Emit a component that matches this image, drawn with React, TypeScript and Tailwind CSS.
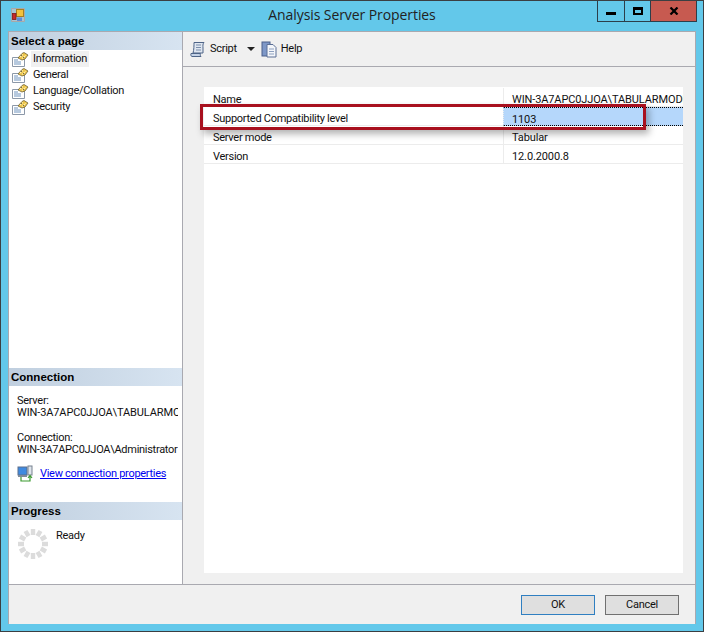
const pages = ['Information', 'General', 'Language/Collation', 'Security'];

const rows = [
  { name: 'Name', value: 'WIN-3A7APC0JJOA\\TABULARMODE' },
  { name: 'Supported Compatibility level', value: '1103', selected: true },
  { name: 'Server mode', value: 'Tabular' },
  { name: 'Version', value: '12.0.2000.8' },
];

function PageIcon() {
  return (
    <svg width="17" height="15" viewBox="0 0 17 15" className="shrink-0">
      <path d="M0.5 5.5H12.5V14.5H0.5Z" fill="#fff" stroke="#8c98a8" />
      <path d="M2 8H6M2 10H9M2 12H9" stroke="#6f93bd" />
      <path d="M6 6L10 1.5L12 0.5L16 3L13 7L10 8Z" fill="#eec64a" stroke="#6e6238" strokeWidth="0.8" />
      <path d="M8 5L11 2.5M10 6.5L13.5 3.5" stroke="#fff6c4" />
      <path d="M9 3L10 4M11 5L12 6" stroke="#4d4a38" strokeWidth="0.8" />
    </svg>
  );
}

function SectionHeader({ title }: { title: string }) {
  return (
    <div
      className="flex h-[18px] items-center bg-gradient-to-r from-[#c0cfdf] to-[#d7e4f1] pl-[2px] pt-[2px] text-[11.5px] font-bold tracking-normal text-black"
      style={{ fontFamily: '"Liberation Sans", Arial, sans-serif' }}
    >
      {title}
    </div>
  );
}

function Spinner() {
  const dots = Array.from({ length: 12 }, (_, i) => (i * 360) / 12);
  return (
    <svg width="30" height="30" viewBox="0 0 30 30">
      {dots.map((angle) => (
        <rect key={angle} x="12.8" y="0" width="4.4" height="6" fill="#dcdcdc" transform={`rotate(${angle} 15 15)`} />
      ))}
    </svg>
  );
}

export default function App() {
  return (
    <div
      className="relative flex h-[632px] w-[704px] flex-col overflow-hidden border border-[#3b3f42] bg-[#63c8ea] text-[11px] tracking-[-0.28px] text-[#111]"
      style={{ fontFamily: 'Roboto, "Liberation Sans", sans-serif' }}
    >
      {/* title bar */}
      <div className="grid h-[30px] shrink-0 grid-cols-[1fr_auto_1fr] items-start">
        <div className="pl-[10px] pt-[7px]">
          <svg width="14" height="14" viewBox="0 0 14 14" className="block">
            <path d="M0.5 0.5H13.5V13.5H0.5Z" fill="#a9c4d2" stroke="#a8a8a8" />
            <rect x="5.5" y="1.5" width="7" height="7" fill="#f3c23c" stroke="#a5801f" />
            <rect x="1.5" y="5.5" width="3.5" height="6" fill="#c62828" stroke="#7a1a1a" strokeWidth="0.8" />
            <rect x="6" y="9.5" width="5" height="3.5" fill="#5d8fd6" />
          </svg>
        </div>
        <div className="pt-[4px] text-[14px] leading-[20px] tracking-[-0.08px] text-[#222]" style={{ fontFamily: '"Open Sans", sans-serif' }}>
          Analysis Server Properties
        </div>
        <div className="flex justify-end pr-[6px]">
          <div className="flex h-[21px] border border-t-0 border-[#2c3e4a]">
            <div className="flex w-[27px] items-center justify-center border-r border-[#2c3e4a]">
              <div className="mt-[5px] h-[3px] w-[10px] bg-black" />
            </div>
            <div className="flex w-[26px] items-center justify-center border-r border-[#2c3e4a]">
              <div className="h-[8px] w-[10px] border-2 border-t-[3px] border-black" />
            </div>
            <div className="flex w-[45px] items-center justify-center bg-[#c75a50]">
              <svg width="10" height="8" viewBox="0 0 10 8">
                <path d="M1.5 0.5L8.5 7.5M8.5 0.5L1.5 7.5" stroke="#000" strokeWidth="2.2" />
              </svg>
            </div>
          </div>
        </div>
      </div>

      {/* client area */}
      <div className="mx-[7px] mb-[7px] flex min-h-0 flex-1 flex-col border-x border-t border-[#a9a9b0] bg-[#f0f0f0]">
        <div className="flex min-h-0 flex-1 border-b border-[#a9a9b0]">
          {/* left panel */}
          <div className="flex w-[174px] shrink-0 flex-col border-r border-[#a9a9b0] bg-white">
            <SectionHeader title="Select a page" />
            <div className="flex flex-col pt-[1px]">
              {pages.map((page, i) => (
                <div key={page} className="flex h-[16px] items-center pl-[3px]">
                  <PageIcon />
                  <span className={`ml-[2px] px-[2px] leading-[16px] ${i === 0 ? 'bg-[#f0f0f0]' : ''}`}>{page}</span>
                </div>
              ))}
            </div>
            <div className="flex-1" />
            <SectionHeader title="Connection" />
            <div className="flex h-[116px] flex-col pl-[8px] pt-[9px] leading-[12px]">
              <div>Server:</div>
              <div className="w-[161px] overflow-hidden whitespace-nowrap tracking-[-0.12px]">WIN-3A7APC0JJOA\TABULARMODE</div>
              <div className="mt-[13px]">Connection:</div>
              <div className="w-[161px] overflow-hidden whitespace-nowrap">WIN-3A7APC0JJOA\Administrator</div>
              <div className="mt-[9px] flex items-center gap-[6px]">
                <svg width="17" height="17" viewBox="0 0 17 17" className="shrink-0">
                  <rect x="1" y="2" width="9" height="8" fill="#3f8ae0" stroke="#5c6f8c" />
                  <rect x="11" y="1" width="4" height="9" fill="#dfe5ec" stroke="#77818f" />
                  <path d="M1 11H10" stroke="#7f8a99" strokeWidth="2" />
                  <path d="M4 12V16H13V11M11 13L13 10.5L15 13" fill="none" stroke="#3b9a2f" strokeWidth="1.2" />
                </svg>
                <span className="whitespace-nowrap text-[#0000f0] underline">View connection properties</span>
              </div>
            </div>
            <SectionHeader title="Progress" />
            <div className="flex h-[64px] items-start pl-[9px] pt-[9px]">
              <Spinner />
              <span className="ml-[8px] leading-[14px]">Ready</span>
            </div>
          </div>

          {/* right panel */}
          <div className="flex min-w-0 flex-1 flex-col">
            <div className="flex h-[35px] shrink-0 items-center border-b border-[#a9a9b0] pl-[7px]">
              <svg width="16" height="17" viewBox="0 0 16 17">
                <path d="M4 1.5H14C12.5 3 13 5 13 7L13 12H3C4 9 4 4 4 1.5Z" fill="#dfe6f0" stroke="#4e6487" />
                <path d="M1 12.5H10.5C10 14 10.5 15 11 15.5H2C1 15.5 0.5 13.5 1 12.5Z" fill="#c4d2e6" stroke="#4e6487" />
                <path d="M6 4H11M6 6.5H11M6 9H11" stroke="#7b8eab" />
              </svg>
              <span className="ml-[4px]">Script</span>
              <div className="ml-[10px] h-0 w-0 border-x-[4px] border-t-[4px] border-x-transparent border-t-[#222]" />
              <svg className="ml-[6px]" width="16" height="17" viewBox="0 0 16 17">
                <rect x="1" y="1" width="8" height="14" fill="#7d97c7" stroke="#4a5f8a" />
                <path d="M6 3.5H12L15 6.5V16H6Z" fill="#f4f6fa" stroke="#5b6f96" />
                <path d="M8 8H13M8 10.5H13M8 13H13" stroke="#8da0bf" />
              </svg>
              <span className="ml-[4px]">Help</span>
            </div>
            <div className="flex min-h-0 flex-1 pb-[11px] pl-[21px] pr-[12px] pt-[20px]">
              <div className="flex-1 bg-white pt-[1px]">
                {rows.map((row) => (
                  <div key={row.name} className="grid h-[19px] grid-cols-[299px_1fr]">
                    <div className="overflow-hidden whitespace-nowrap border-b border-[#ececec] pl-[9px] leading-[24px]">{row.name}</div>
                    <div
                      className={`overflow-hidden whitespace-nowrap border-l border-[#ececec] pl-[8px] leading-[23px] tracking-[-0.12px] ${
                        row.selected ? 'border-y border-dotted border-y-black bg-[#b5d7fb]' : 'border-b'
                      }`}
                    >
                      {row.value}
                    </div>
                  </div>
                ))}
              </div>
            </div>
          </div>
        </div>

        {/* footer */}
        <div className="flex h-[39px] shrink-0 items-start justify-end gap-[10px] pr-[16px] pt-[10px]">
          <button className="h-[20px] w-[74px] border border-[#2f7fc1] bg-[#dfdfdf] text-[11px]">OK</button>
          <button className="h-[20px] w-[74px] border border-[#707070] bg-[#dfdfdf] text-[11px]">Cancel</button>
        </div>
      </div>

      {/* red callout drawn on the screenshot */}
      <div className="absolute left-[199px] top-[103px] h-[26px] w-[446px] border-[3px] border-[#a8101e] shadow-[3px_4px_7px_rgba(0,0,0,0.3)]" />
    </div>
  );
}
